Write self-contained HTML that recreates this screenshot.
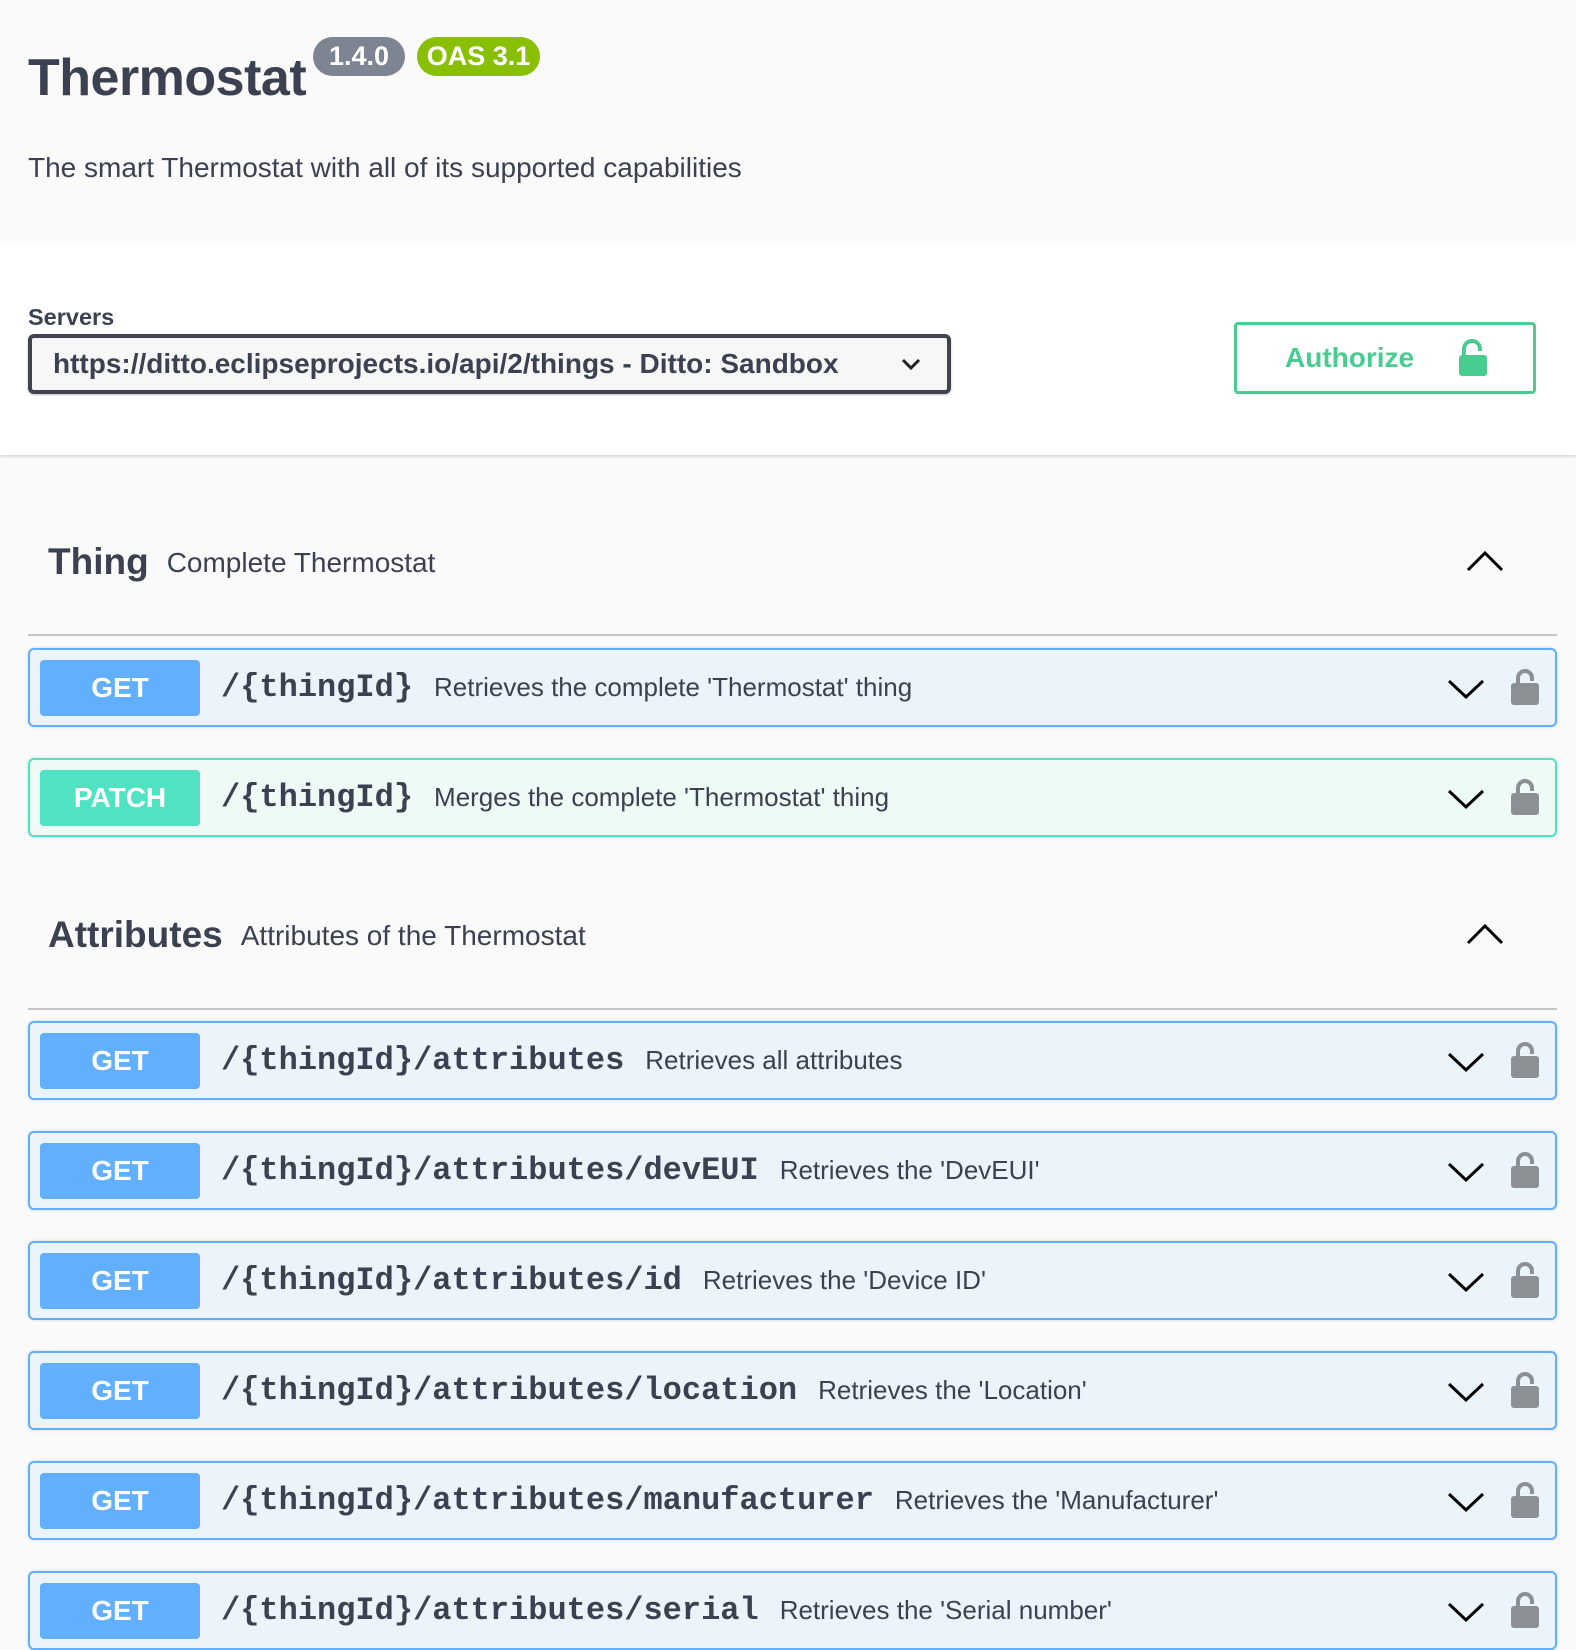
<!DOCTYPE html>
<html><head><meta charset="utf-8"><style>
*{box-sizing:border-box;margin:0;padding:0}
body{width:1576px;height:1646px;overflow:hidden;background:#fafafa;font-family:"Liberation Sans",sans-serif;color:#3b4151;position:relative}
.abs{position:absolute}
.hdr{left:0;top:0;width:1576px;height:243px;background:#fafafa}
.title{left:28px;top:48px;font-size:52px;font-weight:bold;letter-spacing:-0.5px}
.badge{top:37px;height:39px;border-radius:20px;color:#fff;font-weight:bold;font-size:27px;line-height:39px;text-align:center}
.desc{left:28px;top:152px;font-size:28px}
.wsec{left:0;top:243px;width:1576px;height:212px;background:#fff;box-shadow:0 2px 3px rgba(0,0,0,.12)}
.srv{left:28px;top:304px;font-size:23.5px;font-weight:bold}
.sel{left:28px;top:334px;width:923px;height:60px;border:4px solid #41444e;border-radius:6px;background:#f7f7f7;box-shadow:0 1px 2px rgba(0,0,0,.25);font-size:28px;font-weight:bold;line-height:52px;padding-left:21px}
.auth{left:1232px;top:322px;width:302px;height:72px;border:3px solid #49cc90;border-radius:4px;color:#49cc90;font-weight:bold;font-size:28px;line-height:66px;padding-left:48px}
.tag{left:48px;font-size:37px;font-weight:bold}
.tag span{font-size:28px;font-weight:normal;margin-left:18px;vertical-align:2px}
.line{left:28px;width:1525px;height:2px;background:#c4c5c8}
.op{left:28px;width:1525px;height:79px;border:2px solid #61affe;background:#ebf3fb;border-radius:6px;box-shadow:0 0 3px rgba(0,0,0,.15);display:flex;align-items:center}
.op.patch{border-color:#50e3c2;background:#edfaf6}
.m{margin-left:10px;width:160px;height:56px;border-radius:4px;background:#61affe;color:#fff;font-weight:bold;font-size:28px;line-height:56px;text-align:center;flex:none}
.patch .m{background:#50e3c2}
.p{margin-left:21px;font-family:"Liberation Mono",monospace;font-weight:bold;font-size:32px;white-space:nowrap}
.s{margin-left:21px;font-size:26px;white-space:nowrap}
.chev{position:absolute;right:71px;top:28px}
.lock{position:absolute;right:15px;top:18px}
</style></head><body>
<div class="abs hdr"></div>
<div class="abs title">Thermostat</div>
<div class="abs badge" style="left:313px;width:92px;background:#7d8492">1.4.0</div>
<div class="abs badge" style="left:417px;width:123px;background:#89bf04">OAS 3.1</div>
<div class="abs desc">The smart Thermostat with all of its supported capabilities</div>
<div class="abs wsec"></div>
<div class="abs srv">Servers</div>
<div class="abs sel" style="width:923px">https://ditto.eclipseprojects.io/api/2/things - Ditto: Sandbox
<svg class="abs" style="left:868px;top:18px" width="22" height="16" viewBox="0 0 22 16"><path d="M3 4l8 8 8-8" fill="none" stroke="#222" stroke-width="3"/></svg></div>
<div class="abs auth" style="left:1234px">Authorize
<svg class="abs" style="left:220px;top:14px" width="32" height="38" viewBox="0 0 32 38"><path d="M7 17V10a8 8 0 0 1 16 0v2" fill="none" stroke="#49cc90" stroke-width="4"/><rect x="2" y="16" width="28" height="21" rx="3" fill="#49cc90"/></svg></div>

<div class="abs tag" style="top:541px">Thing<span>Complete Thermostat</span></div>
<svg class="abs" style="left:1466px;top:550px" width="38" height="22" viewBox="0 0 38 22"><path d="M2 20L19 3l17 17" fill="none" stroke="#000" stroke-width="3"/></svg>
<div class="abs line" style="top:634px;width:1529px"></div>

<div class="abs tag" style="top:914px">Attributes<span>Attributes of the Thermostat</span></div>
<svg class="abs" style="left:1466px;top:923px" width="38" height="22" viewBox="0 0 38 22"><path d="M2 20L19 3l17 17" fill="none" stroke="#000" stroke-width="3"/></svg>
<div class="abs line" style="top:1008px;width:1529px"></div>

<div class="abs op" style="top:648px;width:1529px"><div class="m">GET</div><div class="p">/{thingId}</div><div class="s">Retrieves the complete 'Thermostat' thing</div>
<svg class="chev" width="36" height="22" viewBox="0 0 36 22"><path d="M1 3l17 16 17-16" fill="none" stroke="#000" stroke-width="3"/></svg>
<svg class="lock" width="30" height="38" viewBox="0 0 30 38"><path d="M8 17V10a7 7 0 0 1 14 0v3" fill="none" stroke="#8c8f93" stroke-width="4"/><rect x="1" y="15" width="28" height="22" rx="3" fill="#8c8f93"/></svg></div>

<div class="abs op patch" style="top:758px;width:1529px"><div class="m">PATCH</div><div class="p">/{thingId}</div><div class="s">Merges the complete 'Thermostat' thing</div>
<svg class="chev" width="36" height="22" viewBox="0 0 36 22"><path d="M1 3l17 16 17-16" fill="none" stroke="#000" stroke-width="3"/></svg>
<svg class="lock" width="30" height="38" viewBox="0 0 30 38"><path d="M8 17V10a7 7 0 0 1 14 0v3" fill="none" stroke="#8c8f93" stroke-width="4"/><rect x="1" y="15" width="28" height="22" rx="3" fill="#8c8f93"/></svg></div>

<div class="abs op" style="top:1021px;width:1529px"><div class="m">GET</div><div class="p">/{thingId}/attributes</div><div class="s">Retrieves all attributes</div>
<svg class="chev" width="36" height="22" viewBox="0 0 36 22"><path d="M1 3l17 16 17-16" fill="none" stroke="#000" stroke-width="3"/></svg>
<svg class="lock" width="30" height="38" viewBox="0 0 30 38"><path d="M8 17V10a7 7 0 0 1 14 0v3" fill="none" stroke="#8c8f93" stroke-width="4"/><rect x="1" y="15" width="28" height="22" rx="3" fill="#8c8f93"/></svg></div>

<div class="abs op" style="top:1131px;width:1529px"><div class="m">GET</div><div class="p">/{thingId}/attributes/devEUI</div><div class="s">Retrieves the 'DevEUI'</div>
<svg class="chev" width="36" height="22" viewBox="0 0 36 22"><path d="M1 3l17 16 17-16" fill="none" stroke="#000" stroke-width="3"/></svg>
<svg class="lock" width="30" height="38" viewBox="0 0 30 38"><path d="M8 17V10a7 7 0 0 1 14 0v3" fill="none" stroke="#8c8f93" stroke-width="4"/><rect x="1" y="15" width="28" height="22" rx="3" fill="#8c8f93"/></svg></div>

<div class="abs op" style="top:1241px;width:1529px"><div class="m">GET</div><div class="p">/{thingId}/attributes/id</div><div class="s">Retrieves the 'Device ID'</div>
<svg class="chev" width="36" height="22" viewBox="0 0 36 22"><path d="M1 3l17 16 17-16" fill="none" stroke="#000" stroke-width="3"/></svg>
<svg class="lock" width="30" height="38" viewBox="0 0 30 38"><path d="M8 17V10a7 7 0 0 1 14 0v3" fill="none" stroke="#8c8f93" stroke-width="4"/><rect x="1" y="15" width="28" height="22" rx="3" fill="#8c8f93"/></svg></div>

<div class="abs op" style="top:1351px;width:1529px"><div class="m">GET</div><div class="p">/{thingId}/attributes/location</div><div class="s">Retrieves the 'Location'</div>
<svg class="chev" width="36" height="22" viewBox="0 0 36 22"><path d="M1 3l17 16 17-16" fill="none" stroke="#000" stroke-width="3"/></svg>
<svg class="lock" width="30" height="38" viewBox="0 0 30 38"><path d="M8 17V10a7 7 0 0 1 14 0v3" fill="none" stroke="#8c8f93" stroke-width="4"/><rect x="1" y="15" width="28" height="22" rx="3" fill="#8c8f93"/></svg></div>

<div class="abs op" style="top:1461px;width:1529px"><div class="m">GET</div><div class="p">/{thingId}/attributes/manufacturer</div><div class="s">Retrieves the 'Manufacturer'</div>
<svg class="chev" width="36" height="22" viewBox="0 0 36 22"><path d="M1 3l17 16 17-16" fill="none" stroke="#000" stroke-width="3"/></svg>
<svg class="lock" width="30" height="38" viewBox="0 0 30 38"><path d="M8 17V10a7 7 0 0 1 14 0v3" fill="none" stroke="#8c8f93" stroke-width="4"/><rect x="1" y="15" width="28" height="22" rx="3" fill="#8c8f93"/></svg></div>

<div class="abs op" style="top:1571px;width:1529px"><div class="m">GET</div><div class="p">/{thingId}/attributes/serial</div><div class="s">Retrieves the 'Serial number'</div>
<svg class="chev" width="36" height="22" viewBox="0 0 36 22"><path d="M1 3l17 16 17-16" fill="none" stroke="#000" stroke-width="3"/></svg>
<svg class="lock" width="30" height="38" viewBox="0 0 30 38"><path d="M8 17V10a7 7 0 0 1 14 0v3" fill="none" stroke="#8c8f93" stroke-width="4"/><rect x="1" y="15" width="28" height="22" rx="3" fill="#8c8f93"/></svg></div>
</body></html>
